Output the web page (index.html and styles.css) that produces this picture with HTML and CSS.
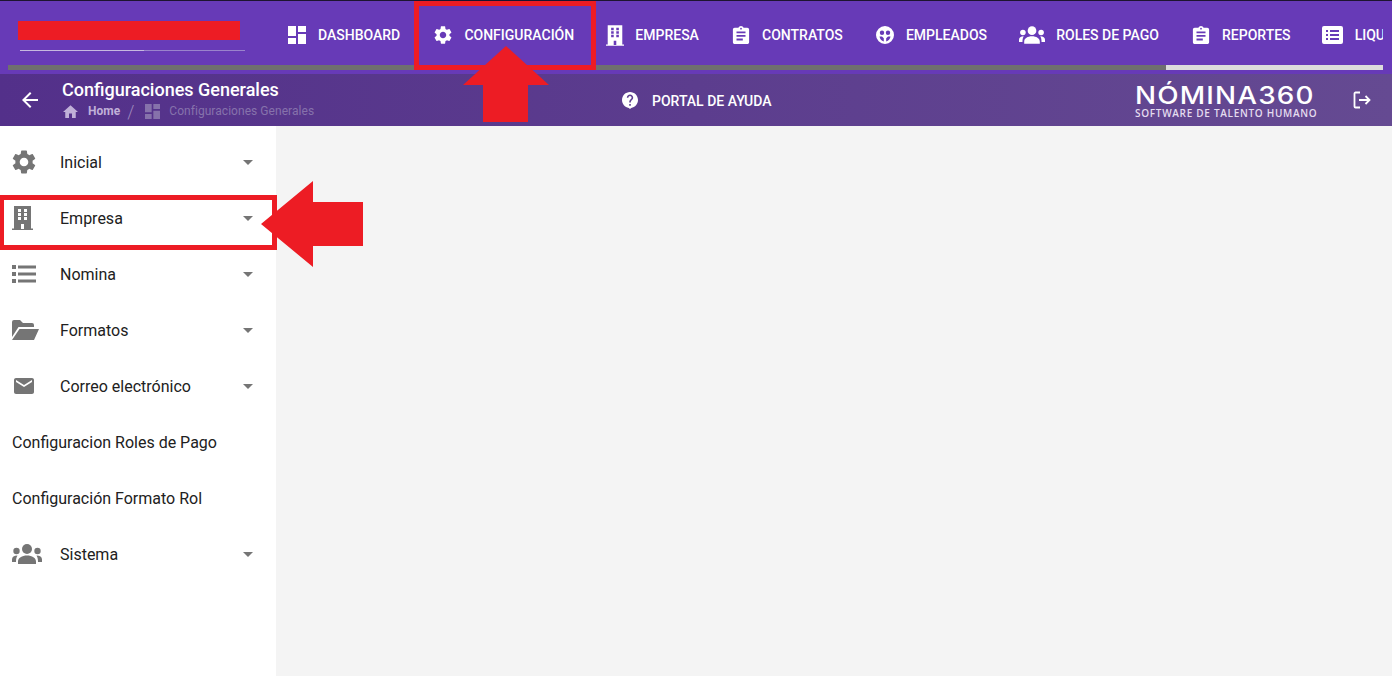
FILE: index.html
```html
<!doctype html>
<html>
    <head>
        <meta charset="utf-8">
        <title>Configuraciones Generales</title>
        <link rel="stylesheet" href="styles.css">
    </head>
    <body>
    <svg class="defs" width="0" height="0">
        <symbol id="i-dashboard" viewBox="3 3 18 18"><path d="M3 13h8V3H3v10zm0 8h8v-6H3v6zm10 0h8V11h-8v10zm0-18v6h8V3h-8z"/></symbol>
        <symbol id="i-gear" viewBox="2 2 20 20"><path d="M19.14 12.94c.04-.3.06-.61.06-.94 0-.32-.02-.64-.07-.94l2.03-1.58c.18-.14.23-.41.12-.61l-1.92-3.32c-.12-.22-.37-.29-.59-.22l-2.39.96c-.5-.38-1.03-.7-1.62-.94l-.36-2.54c-.04-.24-.24-.41-.48-.41h-3.84c-.24 0-.43.17-.47.41l-.36 2.54c-.59.24-1.13.57-1.62.94l-2.39-.96c-.22-.08-.47 0-.59.22L2.74 8.87c-.12.21-.08.47.12.61l2.03 1.58c-.05.3-.09.63-.09.94s.02.64.07.94l-2.03 1.58c-.18.14-.23.41-.12.61l1.92 3.32c.12.22.37.29.59.22l2.39-.96c.5.38 1.03.7 1.62.94l.36 2.54c.05.24.24.41.48.41h3.84c.24 0 .44-.17.47-.41l.36-2.54c.59-.24 1.13-.56 1.62-.94l2.39.96c.22.08.47 0 .59-.22l1.92-3.32c.12-.22.07-.47-.12-.61l-2.01-1.58zM12 15.6c-1.98 0-3.6-1.62-3.6-3.6s1.62-3.6 3.6-3.6 3.6 1.62 3.6 3.6-1.62 3.6-3.6 3.6z"/></symbol>
        <symbol id="i-building" viewBox="0 0 21 24"><path fill-rule="evenodd" d="M2 0h17v22.500h2V24H0v-1.500h2V0zm4 3v3h3V3H6zm6 0v3h3V3h-3zM6 7v3h3V7H6zm6 0v3h3V7h-3zM6 11v3h3v-3H6zm6 0v3h3v-3h-3zM9 18v5h3v-5H9z"/></symbol>
        <symbol id="i-clipboard" viewBox="3 1 18 20"><path d="M19 3h-4.180C14.400 1.840 13.300 1 12 1c-1.300 0-2.400.84-2.820 2H5c-1.100 0-2 .9-2 2v14c0 1.100.9 2 2 2h14c1.100 0 2-.9 2-2V5c0-1.100-.9-2-2-2zm-7 0c.55 0 1 .45 1 1s-.45 1-1 1-1-.45-1-1 .45-1 1-1zm2 14H7v-2h7v2zm3-4H7v-2h10v2zm0-4H7V7h10v2z"/></symbol>
        <symbol id="i-face" viewBox="0 0 18 18"><path fill-rule="evenodd" d="M9 0a9 9 0 1 1 0 18A9 9 0 0 1 9 0zM6 4.500a2.200 2.200 0 1 0 0 4.400 2.200 2.200 0 0 0 0-4.400zm6 0a2.200 2.200 0 1 0 0 4.400 2.200 2.200 0 0 0 0-4.400zM3.500 10.500c.4 2.600 2 4.300 4.300 4.900v-3.200L6 10.500H3.500zm11 0H12l-1.800 1.700v3.200c2.300-.6 3.900-2.300 4.300-4.900z"/></symbol>
        <symbol id="i-group" viewBox="0 0 30 20"><circle cx="15" cy="5" r="5"/><circle cx="4.500" cy="7" r="3.200"/><circle cx="25.500" cy="7" r="3.200"/><path d="M6 20v-2.500C6 14 10 11.500 15 11.500S24 14 24 17.500V20H6zM0 18v-2.500C0 13 2 11.500 5.500 11.500c-.9 1.600-1.500 3-1.500 6.500H0zM30 18v-2.500c0-2.500-2-4-5.500-4 .9 1.600 1.500 3 1.500 6.500h4z"/></symbol>
        <symbol id="i-listalt" viewBox="0 0 21 18"><path fill-rule="evenodd" d="M2 0h17a2 2 0 0 1 2 2v14a2 2 0 0 1-2 2H2a2 2 0 0 1-2-2V2a2 2 0 0 1 2-2zm2 4v2h2V4H4zm4 0v2h9V4H8zM4 8v2h2V8H4zm4 0v2h9V8H8zM4 12v2h2v-2H4zm4 0v2h9v-2H8z"/></symbol>
        <symbol id="i-help" viewBox="2 2 20 21"><path d="M12 2C6.480 2 2 6.480 2 12c0 5 3.700 9.200 8.500 9.900L12 23l1.500-1.100C18.300 21.200 22 17 22 12c0-5.520-4.480-10-10-10zm1 17h-2v-2h2v2zm2.070-7.750l-.9.920C13.450 12.900 13 13.500 13 15h-2v-.5c0-1.100.45-2.100 1.170-2.830l1.240-1.260c.37-.36.59-.86.59-1.410 0-1.100-.9-2-2-2s-2 .9-2 2H8c0-2.210 1.790-4 4-4s4 1.790 4 4c0 .88-.36 1.680-.93 2.250z"/></symbol>
        <symbol id="i-list" viewBox="0 0 24 20"><path d="M0 1h4v4H0zM6 1.500h18v3H6zM0 8h4v4H0zM6 8.500h18v3H6zM0 15h4v4H0zM6 15.500h18v3H6z"/></symbol>
        <symbol id="i-folder" viewBox="0 0 27 20"><path d="M0 2a2 2 0 0 1 2-2h6l3 3h9a2 2 0 0 1 2 2v2H6.500L0 17V2zM7.500 9H27l-5 11H0l7.500-11z"/></symbol>
        <symbol id="i-mail" viewBox="2 4 20 16"><path d="M20 4H4c-1.100 0-2 .9-2 2v12c0 1.100.9 2 2 2h16c1.100 0 2-.9 2-2V6c0-1.100-.9-2-2-2zm0 4l-8 5-8-5V6l8 5 8-5v2z"/></symbol>
    </svg>

    <header class="topbar">
        <div class="toprow">
            <div class="brand">
                <div class="brand-bar"></div>
                <div class="brand-line"></div>
            </div>
            <nav class="mainnav">
                <a class="navitem"><svg class="ic w18"><use href="#i-dashboard"/></svg>Dashboard</a>
                <a class="navitem navitem-config"><svg class="ic w18"><use href="#i-gear"/></svg>Configuración</a>
                <a class="navitem"><svg class="ic w18 tall"><use href="#i-building"/></svg>Empresa</a>
                <a class="navitem"><svg class="ic w18"><use href="#i-clipboard"/></svg>Contratos</a>
                <a class="navitem"><svg class="ic w18"><use href="#i-face"/></svg>Empleados</a>
                <a class="navitem"><svg class="ic w26"><use href="#i-group"/></svg>Roles de pago</a>
                <a class="navitem"><svg class="ic w18"><use href="#i-clipboard"/></svg>Reportes</a>
                <a class="navitem navitem-last"><svg class="ic w21"><use href="#i-listalt"/></svg>Liquidaciones</a>
            </nav>
        </div>
        <div class="scrollbar"><div class="scrollbar-thumb"></div></div>
    </header>

    <div class="subbar">
        <div class="back">
            <svg class="back-ic" viewBox="0 0 24 24"><path d="M20 11H7.830l5.590-5.590L12 4l-8 8 8 8 1.410-1.410L7.830 13H20v-2z"/></svg>
        </div>
        <div class="crumbs">
            <div class="page-title">Configuraciones Generales</div>
            <div class="crumb-row">
                <svg class="crumb-home" viewBox="2 3 20 17"><path d="M10 20v-6h4v6h5v-8h3L12 3 2 12h3v8z"/></svg>
                <span class="crumb-link">Home</span>
                <span class="crumb-sep">/</span>
                <svg class="crumb-dash"><use href="#i-dashboard"/></svg>
                <span class="crumb-current">Configuraciones Generales</span>
            </div>
        </div>
        <a class="help"><svg class="help-ic"><use href="#i-help"/></svg>PORTAL DE AYUDA</a>
        <div class="logo">
            <div class="logo-name">NÓMINA360</div>
            <div class="logo-sub">SOFTWARE DE TALENTO HUMANO</div>
        </div>
        <svg class="logout" viewBox="0 0 18 18"><path d="M7 1.500H2.500a1 1 0 0 0-1 1v13a1 1 0 0 0 1 1H7" fill="none"/><path d="M6 9h10.500M12.500 5l4 4-4 4" fill="none"/></svg>
    </div>

    <div class="main">
        <aside class="sidenav">
            <a class="sideitem"><span class="slot"><svg class="sic gear"><use href="#i-gear"/></svg></span><span class="label">Inicial</span><i class="caret"></i></a>
            <a class="sideitem"><span class="slot"><svg class="sic build"><use href="#i-building"/></svg></span><span class="label">Empresa</span><i class="caret"></i></a>
            <a class="sideitem"><span class="slot"><svg class="sic list"><use href="#i-list"/></svg></span><span class="label">Nomina</span><i class="caret"></i></a>
            <a class="sideitem"><span class="slot"><svg class="sic folder"><use href="#i-folder"/></svg></span><span class="label">Formatos</span><i class="caret"></i></a>
            <a class="sideitem"><span class="slot"><svg class="sic mail"><use href="#i-mail"/></svg></span><span class="label">Correo electrónico</span><i class="caret"></i></a>
            <a class="sideitem"><span class="label">Configuracion Roles de Pago</span></a>
            <a class="sideitem"><span class="label">Configuración Formato Rol</span></a>
            <a class="sideitem"><span class="slot"><svg class="sic group"><use href="#i-group"/></svg></span><span class="label">Sistema</span><i class="caret"></i></a>
        </aside>
        <section class="content"></section>
    </div>

    <!-- marcas del manual -->
    <div class="mark mark-nav"></div>
    <div class="mark mark-side"></div>
    <svg class="arrow arrow-up" viewBox="0 0 88 78"><path d="M44 0 L87 39 L66 39 L66 76 L21 76 L21 39 L1 39 Z"/></svg>
    <svg class="arrow arrow-left" viewBox="0 0 104 88"><path d="M1 44 L53 1 L53 22 L103 22 L103 66 L53 66 L53 87 Z"/></svg>
</body>
</html>
```

FILE: styles.css
```css
html, body {
    margin: 0;
    height: 676px;
    overflow: hidden;
}
body {
    font-family: Roboto, "Liberation Sans", sans-serif;
    background-color: #fff;
}
.defs {
    position: absolute;
}
a {
    color: inherit;
    text-decoration: none;
}

/* top bar */
.topbar {
    background-color: #673ab7;
    border-top: 1px solid #1d1430;
    color: #fff;
    height: 73px;
}
.toprow {
    display: flex;
    height: 60px;
    padding-top: 4px;
    padding-right: 9px;
}
.brand {
    flex: none;
    width: 288px;
    margin-top: -4px;
    padding-top: 20px;
    padding-left: 18px;
    box-sizing: border-box;
}
.brand-bar {
    width: 222px;
    height: 19px;
    background-color: #ed1c24;
}
.brand-line {
    width: 225px;
    height: 1px;
    margin-top: 10px;
    margin-left: 2px;
    background: linear-gradient(90deg, #c6b8e0 55%, #9a83cc 55%);
}
.mainnav {
    display: flex;
    align-items: center;
    gap: 33.150px;
    flex: 1;
    min-width: 0;
    overflow: hidden;
    font-size: 14px;
    font-weight: 500;
    text-transform: uppercase;
    white-space: nowrap;
}
.navitem {
    display: flex;
    align-items: center;
    gap: 12px;
    flex: none;
}
.navitem-config {
    margin-left: 1px;
    margin-right: -1px;
}
.navitem-last {
    margin-left: -2px;
}
.ic {
    fill: #fff;
    height: 18px;
    flex: none;
}
.w18 { width: 18px; }
.w21 { width: 21px; }
.w26 { width: 26px; margin-left: -1px; margin-right: -1px; }
.tall { height: 21px; margin-right: -1px; }
.scrollbar {
    height: 5px;
    margin: 0 9px 0 8px;
    background-color: #6f6f6f;
    display: flex;
    justify-content: flex-end;
}
.scrollbar-thumb {
    width: 217px;
    background-color: #dcdcdc;
}

/* sub bar */
.subbar {
    display: flex;
    align-items: center;
    height: 52px;
    background: linear-gradient(90deg, #53308a, #654a92);
    color: #fff;
}
.back {
    flex: none;
    width: 62px;
    padding-left: 18px;
    box-sizing: border-box;
    display: flex;
}
.back-ic {
    width: 24px;
    height: 24px;
    fill: #fff;
}
.crumbs {
    flex: none;
    width: 560px;
}
.page-title {
    font-size: 18px;
    font-weight: 500;
    line-height: 22px;
    margin-top: -1px;
}
.crumb-row {
    display: flex;
    align-items: center;
    height: 18px;
    margin-top: 1px;
    font-size: 12px;
}
.crumb-home {
    width: 15px;
    height: 13px;
    margin-left: 1px;
    fill: #c0b0d8;
}
.crumb-link {
    margin-left: 10px;
    font-weight: 700;
    color: #c0b0d8;
}
.crumb-sep {
    margin-left: 7px;
    font-size: 18px;
    font-weight: 300;
    color: #9d88bd;
}
.crumb-dash {
    width: 15px;
    height: 15px;
    margin-left: 11px;
    fill: #8672ab;
}
.crumb-current {
    margin-left: 9px;
    letter-spacing: 0.050px;
    color: #8672ab;
}
.help {
    display: flex;
    align-items: center;
    gap: 14px;
    font-size: 14px;
    font-weight: 500;
    padding-top: 1px;
}
.help-ic {
    width: 16px;
    height: 17px;
    fill: #fff;
}
.logo {
    margin-left: auto;
    margin-top: 4px;
    width: 182px;
    color: #fff;
}
.logo-name {
    font-family: Inter, sans-serif;
    font-size: 24px;
    font-weight: 500;
    line-height: 20px;
    letter-spacing: 1px;
    white-space: nowrap;
    transform: scaleX(1.160);
    transform-origin: left center;
}
.logo-sub {
    font-family: "Open Sans", sans-serif;
    font-size: 10px;
    font-weight: 600;
    line-height: 9px;
    margin-top: 3px;
    letter-spacing: 0.700px;
    color: #e4dcef;
    white-space: nowrap;
}
.logout {
    width: 18px;
    height: 18px;
    margin-left: 36px;
    margin-right: 21px;
    stroke: #fff;
    stroke-width: 1.800;
}

/* side menu */
.main {
    display: flex;
    height: 550px;
}
.sidenav {
    flex: none;
    width: 276px;
    padding-top: 8px;
    box-sizing: border-box;
    color: #212121;
    font-size: 16px;
}
.sideitem {
    display: flex;
    align-items: center;
    height: 56px;
    padding: 0 23px 0 12px;
}
.slot {
    flex: none;
    width: 48px;
    display: flex;
    align-items: center;
}
.label {
    flex: 1;
    white-space: nowrap;
}
.sic {
    fill: #757575;
    flex: none;
}
.gear { width: 24px; height: 24px; }
.build { width: 21px; height: 24px; }
.list { width: 24px; height: 20px; }
.folder { width: 27px; height: 20px; }
.mail { width: 20px; height: 16px; margin-left: 2px; }
.group { width: 30px; height: 20px; }
.caret {
    flex: none;
    width: 0;
    height: 0;
    border-left: 5.500px solid transparent;
    border-right: 5.500px solid transparent;
    border-top: 5.500px solid #757575;
}
.content {
    flex: 1;
    background-color: #f4f4f4;
}

/* red marks on top of the screen */
.mark {
    position: absolute;
    box-sizing: border-box;
    border: 5px solid #ed1c24;
}
.mark-nav {
    left: 414px;
    top: 1px;
    width: 182px;
    height: 69px;
}
.mark-side {
    left: -1px;
    top: 195px;
    width: 278px;
    height: 55px;
}
.arrow {
    position: absolute;
    fill: #ed1c24;
}
.arrow-up {
    left: 462px;
    top: 46px;
    width: 88px;
    height: 78px;
}
.arrow-left {
    left: 260px;
    top: 180px;
    width: 104px;
    height: 88px;
}
```
